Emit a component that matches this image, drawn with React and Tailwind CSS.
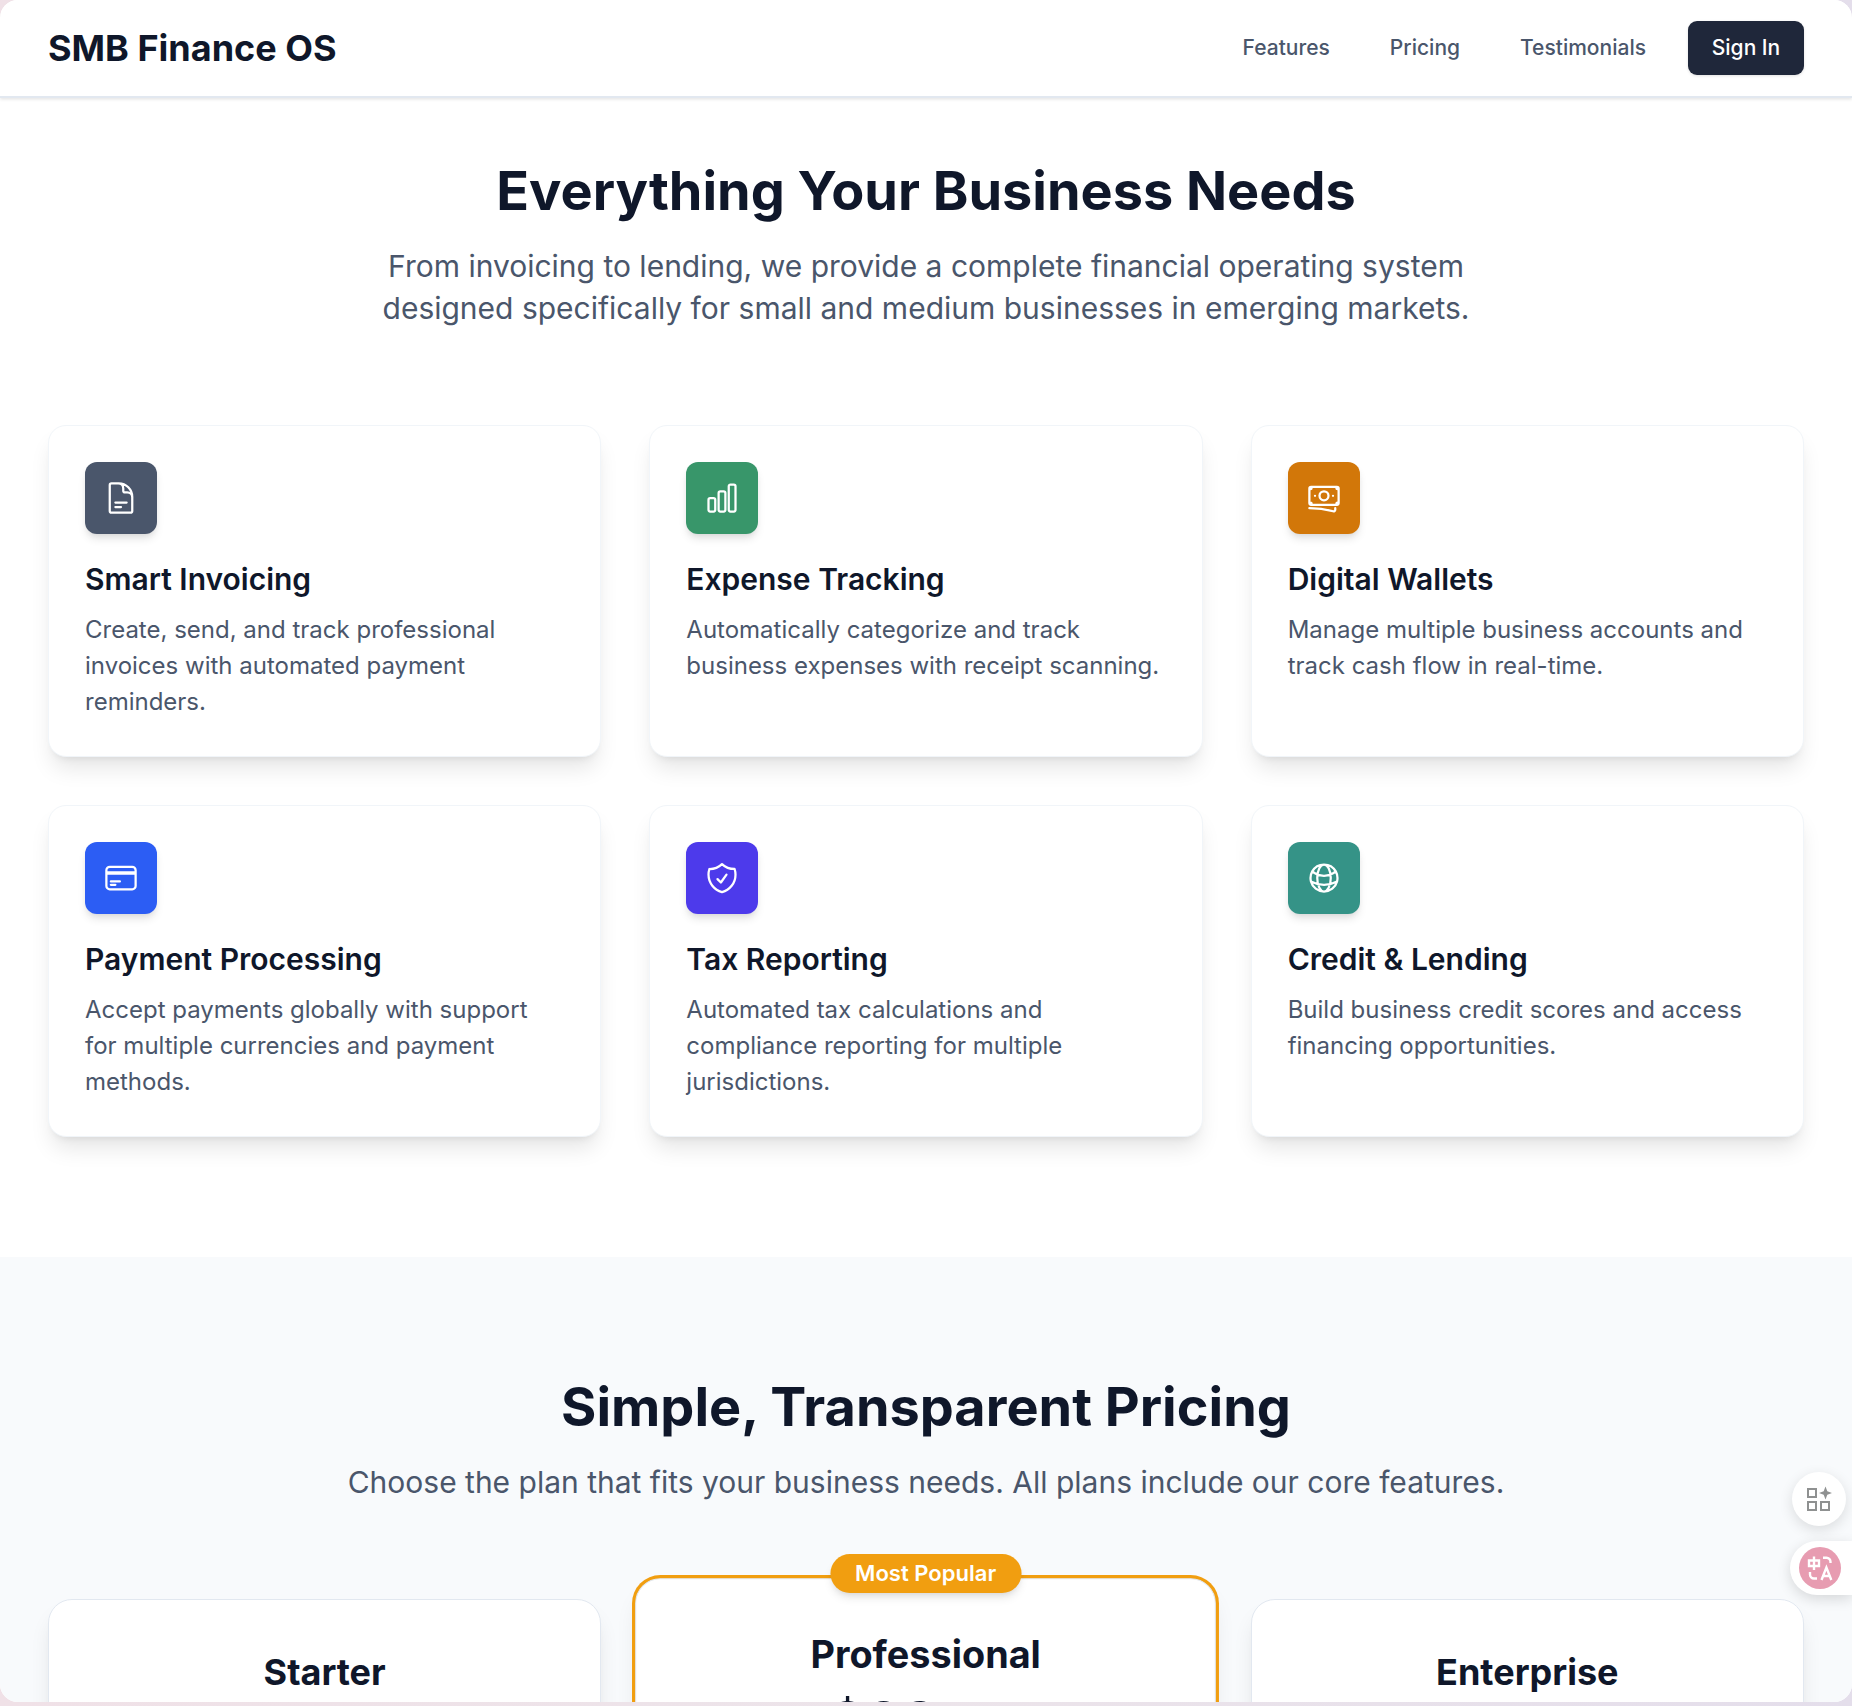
import React from "react";
import {
  HiOutlineDocumentText,
  HiOutlineChartBar,
  HiOutlineBanknotes,
  HiOutlineCreditCard,
  HiOutlineShieldCheck,
  HiOutlineGlobeAlt,
} from "react-icons/hi2";

const features = [
  {
    icon: HiOutlineDocumentText,
    tile: "bg-[#4a566b]",
    title: "Smart Invoicing",
    lines: ["Create, send, and track professional", "invoices with automated payment", "reminders."],
  },
  {
    icon: HiOutlineChartBar,
    tile: "bg-[#38966a]",
    title: "Expense Tracking",
    lines: ["Automatically categorize and track", "business expenses with receipt scanning."],
  },
  {
    icon: HiOutlineBanknotes,
    tile: "bg-[#d27709]",
    title: "Digital Wallets",
    lines: ["Manage multiple business accounts and", "track cash flow in real-time."],
  },
  {
    icon: HiOutlineCreditCard,
    tile: "bg-[#2c5df4]",
    title: "Payment Processing",
    lines: ["Accept payments globally with support", "for multiple currencies and payment", "methods."],
  },
  {
    icon: HiOutlineShieldCheck,
    tile: "bg-[#4d3aeb]",
    title: "Tax Reporting",
    lines: ["Automated tax calculations and", "compliance reporting for multiple", "jurisdictions."],
  },
  {
    icon: HiOutlineGlobeAlt,
    tile: "bg-[#359387]",
    title: "Credit & Lending",
    lines: ["Build business credit scores and access", "financing opportunities."],
  },
];

function Header() {
  return (
    <header className="relative z-10 flex h-[98px] shrink-0 items-center justify-between border-b-2 border-[#e2e8f0] bg-white px-12 shadow-[0_1.5px_3px_rgba(0,0,0,0.1)]">
      <div className="text-[36px] leading-[48px] font-bold whitespace-nowrap text-[#0f172a]">SMB Finance OS</div>
      <nav className="flex items-center gap-6 text-[21px] leading-[30px] font-medium text-[#4a566b]">
        <a className="px-[18px]">Features</a>
        <a className="px-[18px]">Pricing</a>
        <a className="px-[18px]">Testimonials</a>
        <button className="h-[54px] w-[116px] rounded-[9px] bg-[#1f273a] whitespace-nowrap text-white shadow-[0_1px_3px_rgba(0,0,0,0.12)]">
          Sign In
        </button>
      </nav>
    </header>
  );
}

function SectionTitle({ title, lines }) {
  return (
    <div className="mb-24 text-center">
      <h2 className="mb-6 text-[54px] leading-[60px] font-bold text-[#0f172a]">{title}</h2>
      <p className="text-[30px] leading-[42px] text-[#4a566b]">
        {lines.map((line) => (
          <span key={line} className="block whitespace-nowrap">{line}</span>
        ))}
      </p>
    </div>
  );
}

function FeatureCard({ icon: Icon, tile, title, lines }) {
  return (
    <div className="h-[332px] rounded-[18px] border border-[#f1f5f9] bg-white p-9 shadow-[0_15px_22.5px_-4.5px_rgba(0,0,0,0.1),0_6px_9px_-6px_rgba(0,0,0,0.1)]">
      <div className={`mb-6 flex size-[72px] items-center justify-center rounded-[12px] text-white shadow-[0_6px_9px_-1.5px_rgba(0,0,0,0.1),0_3px_6px_-3px_rgba(0,0,0,0.1)] ${tile}`}>
        <Icon className="size-9" />
      </div>
      <h3 className="mb-3 text-[30px] leading-[42px] font-semibold text-[#0f172a]">{title}</h3>
      <p className="text-[24px] leading-[36px] text-[#4a566b]">
        {lines.map((line) => (
          <span key={line} className="block whitespace-nowrap">{line}</span>
        ))}
      </p>
    </div>
  );
}

function PlanCard({ name }) {
  return (
    <div className="h-[832px] rounded-[24px] border border-[#e2e8f0] bg-white p-12 text-center shadow-[0_15px_22.5px_-4.5px_rgba(0,0,0,0.1),0_6px_9px_-6px_rgba(0,0,0,0.1)]">
      <h3 className="text-[36px] leading-[48px] font-bold text-[#0f172a]">{name}</h3>
    </div>
  );
}

function FloatingTools() {
  return (
    <div className="absolute top-[1472px] right-0 z-20 flex w-[62px] flex-col gap-[15px]">
      <div className="ml-[2px] flex size-[54px] items-center justify-center rounded-full bg-white shadow-[0_4px_14px_rgba(0,0,0,0.12)]">
        <svg viewBox="0 0 26 26" className="size-[26px]" fill="none" stroke="#8f9191" strokeWidth="2">
          <rect x="2" y="3" width="8" height="8" />
          <rect x="2" y="16" width="8" height="8" />
          <rect x="15" y="16" width="8" height="8" />
          <path d="M19.5.5 21.3 5.2 26 7l-4.7 1.8-1.8 4.7-1.8-4.7L13 7l4.700-1.800Z" fill="#8f9191" stroke="none" />
        </svg>
      </div>
      <div className="flex h-[54px] w-full items-center rounded-l-full bg-white pl-[9px] shadow-[0_4px_14px_rgba(0,0,0,0.14)]">
        <div className="flex size-[42px] items-center justify-center rounded-full bg-[#e79cb1]">
          <svg viewBox="0 0 26 26" className="size-[26px]" fill="none" stroke="#fff" strokeWidth="2.4">
            <path d="M2 5.500h10v5.500H2ZM7 1.500v13.500" />
            <path d="M16 2.700h3.500a4 4 0 0 1 4 4v1.300" />
            <path d="M3 17v2.500a4 4 0 0 0 4 4h3" />
            <path d="m14.500 25 4.900-12.500L24.300 25M16 21h7" />
          </svg>
        </div>
      </div>
    </div>
  );
}

export default function App() {
  return (
    <div className="h-[1706px] w-[1852px] overflow-hidden bg-gradient-to-r from-[#f0e1e7] via-[#ece4ea] to-[#e4deeb] font-['Inter',sans-serif]">
      <div className="relative flex h-[1702px] flex-col overflow-hidden rounded-[18px] bg-white">
        <Header />
        <section className="px-12 pt-[63px] pb-[120px]">
          <SectionTitle
            title="Everything Your Business Needs"
            lines={[
              "From invoicing to lending, we provide a complete financial operating system",
              "designed specifically for small and medium businesses in emerging markets.",
            ]}
          />
          <div className="grid grid-cols-3 gap-12">
            {features.map((feature) => (
              <FeatureCard key={feature.title} {...feature} />
            ))}
          </div>
        </section>
        <section className="h-[445px] shrink-0 bg-[#f8fafc] px-12 pt-[120px]">
          <SectionTitle
            title="Simple, Transparent Pricing"
            lines={["Choose the plan that fits your business needs. All plans include our core features."]}
          />
          <div className="grid grid-cols-3 gap-12">
            <PlanCard name="Starter" />
            <div className="relative h-[832px] scale-105 rounded-[24px] border border-[#e2e8f0] bg-white p-12 text-center shadow-[0_0_0_3px_#f19e10,0_15px_22.5px_-4.5px_rgba(0,0,0,0.1),0_6px_9px_-6px_rgba(0,0,0,0.1)]">
              <div className="absolute -top-6 left-1/2 flex h-[37px] w-[182px] -translate-x-1/2 items-center justify-center rounded-full bg-[#f19e10] text-[21px] leading-[30px] font-semibold whitespace-nowrap text-white shadow-[0_6px_9px_-1.5px_rgba(0,0,0,0.1),0_3px_6px_-3px_rgba(0,0,0,0.1)]">
                Most Popular
              </div>
              <h3 className="mb-[11px] text-[36px] leading-[48px] font-bold text-[#0f172a]">Professional</h3>
              <div className="pr-[80px] text-[54px] leading-[60px] font-bold text-[#0f172a]">$29</div>
            </div>
            <PlanCard name="Enterprise" />
          </div>
        </section>
        <FloatingTools />
      </div>
    </div>
  );
}
